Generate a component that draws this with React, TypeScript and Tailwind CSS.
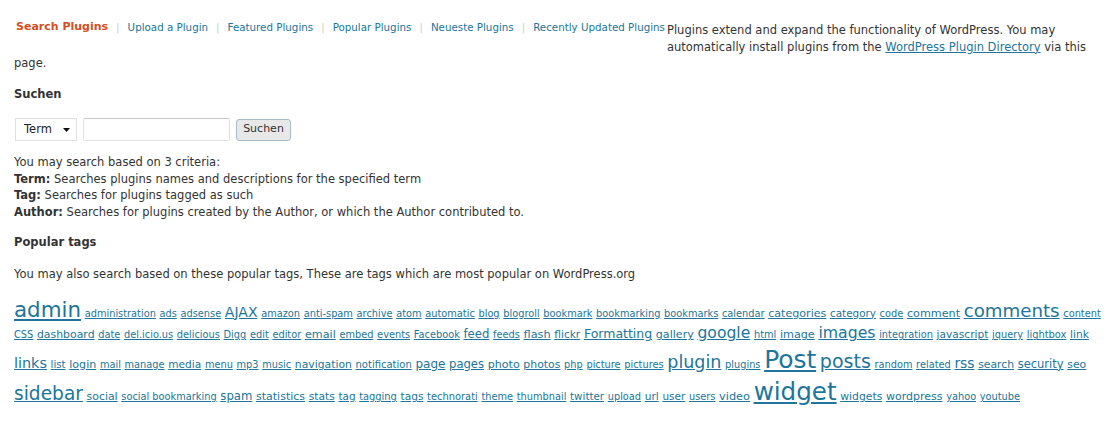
import React from "react";

const tags: [string, string][] = [
    ["admin", "text-[21.4px]"],
    ["administration", "text-[9.8px]"],
    ["ads", "text-[9.8px]"],
    ["adsense", "text-[9.8px]"],
    ["AJAX", "text-[14px]"],
    ["amazon", "text-[9.8px]"],
    ["anti-spam", "text-[9.8px]"],
    ["archive", "text-[9.8px]"],
    ["atom", "text-[9.8px]"],
    ["automatic", "text-[9.8px]"],
    ["blog", "text-[9.8px]"],
    ["blogroll", "text-[9.8px]"],
    ["bookmark", "text-[9.8px]"],
    ["bookmarking", "text-[9.8px]"],
    ["bookmarks", "text-[9.8px]"],
    ["calendar", "text-[9.8px]"],
    ["categories", "text-[11.1px]"],
    ["category", "text-[10.4px]"],
    ["code", "text-[9.8px]"],
    ["comment", "text-[11.2px]"],
    ["comments", "text-[18.2px]"],
    ["content", "text-[9.8px]"],
    ["CSS", "text-[9.8px]"],
    ["dashboard", "text-[10.9px]"],
    ["date", "text-[9.8px]"],
    ["del.icio.us", "text-[9.8px]"],
    ["delicious", "text-[9.8px]"],
    ["Digg", "text-[9.8px]"],
    ["edit", "text-[9.8px]"],
    ["editor", "text-[9.8px]"],
    ["email", "text-[11.2px]"],
    ["embed", "text-[9.8px]"],
    ["events", "text-[9.8px]"],
    ["Facebook", "text-[9.8px]"],
    ["feed", "text-[11.7px]"],
    ["feeds", "text-[9.8px]"],
    ["flash", "text-[11.3px]"],
    ["flickr", "text-[10.6px]"],
    ["Formatting", "text-[12.5px]"],
    ["gallery", "text-[11.1px]"],
    ["google", "text-[15.6px]"],
    ["html", "text-[9.8px]"],
    ["image", "text-[11.2px]"],
    ["images", "text-[15.7px]"],
    ["integration", "text-[9.8px]"],
    ["javascript", "text-[10.6px]"],
    ["jquery", "text-[9.8px]"],
    ["lightbox", "text-[9.9px]"],
    ["link", "text-[10.7px]"],
    ["links", "text-[14.4px]"],
    ["list", "text-[10.2px]"],
    ["login", "text-[11.1px]"],
    ["mail", "text-[9.8px]"],
    ["manage", "text-[9.8px]"],
    ["media", "text-[10.6px]"],
    ["menu", "text-[9.8px]"],
    ["mp3", "text-[9.8px]"],
    ["music", "text-[9.8px]"],
    ["navigation", "text-[10.8px]"],
    ["notification", "text-[10px]"],
    ["page", "text-[12px]"],
    ["pages", "text-[11.6px]"],
    ["photo", "text-[11.1px]"],
    ["photos", "text-[10.9px]"],
    ["php", "text-[9.8px]"],
    ["picture", "text-[9.8px]"],
    ["pictures", "text-[9.8px]"],
    ["plugin", "text-[17.5px]"],
    ["plugins", "text-[9.8px]"],
    ["Post", "text-[24.9px]"],
    ["posts", "text-[19px]"],
    ["random", "text-[9.8px]"],
    ["related", "text-[9.8px]"],
    ["rss", "text-[13.8px]"],
    ["search", "text-[10.8px]"],
    ["security", "text-[11.5px]"],
    ["seo", "text-[10.8px]"],
    ["sidebar", "text-[18.6px]"],
    ["social", "text-[10.9px]"],
    ["social bookmarking", "text-[9.8px]"],
    ["spam", "text-[11.7px]"],
    ["statistics", "text-[11px]"],
    ["stats", "text-[10.7px]"],
    ["tag", "text-[10.4px]"],
    ["tagging", "text-[9.9px]"],
    ["tags", "text-[10.6px]"],
    ["technorati", "text-[9.9px]"],
    ["theme", "text-[9.8px]"],
    ["thumbnail", "text-[9.8px]"],
    ["twitter", "text-[10.3px]"],
    ["upload", "text-[9.8px]"],
    ["url", "text-[10.6px]"],
    ["user", "text-[10.5px]"],
    ["users", "text-[9.8px]"],
    ["video", "text-[11.3px]"],
    ["widget", "text-[24.6px]"],
    ["widgets", "text-[10.8px]"],
    ["wordpress", "text-[11px]"],
    ["yahoo", "text-[9.8px]"],
    ["youtube", "text-[9.8px]"],
];

const navLinks = ["Upload a Plugin", "Featured Plugins", "Popular Plugins", "Neueste Plugins", "Recently Updated Plugins"];

export default function App() {
    return (
        <div className="min-h-[422px] bg-white px-[14px] pt-[22px] font-['DejaVu_Sans',sans-serif] text-[11.5px] leading-[16.5px] text-[#333]">
            {/* sub navigation, floated like the old admin screens */}
            <ul className="float-left -mt-[3px] mr-[2px] ml-[2px] flex h-[28px] items-start text-[10.3px] leading-[16.5px]">
                <li className="font-bold text-[#d54e21] text-[11px]">Search Plugins</li>
                {navLinks.map((l) => (
                    <li key={l} className="flex">
                        <span className="px-[8px] text-[#ccc]">|</span>
                        <a href="#" className="text-[#21759b]">{l}</a>
                    </li>
                ))}
            </ul>
            <p>
                Plugins extend and expand the functionality of WordPress. You may automatically install plugins from the{" "}
                <a href="#" className="text-[#21759b] underline">WordPress Plugin Directory</a> via this page.
            </p>

            <h4 className="mt-[14px] font-bold">Suchen</h4>
            <form className="mt-[16px] flex items-center gap-[6px] pl-[1px]">
                <div className="relative">
                    <select className="h-[23px] w-[62px] appearance-none border border-[#dfdfdf] bg-white pl-[8px] text-[11.5px] text-[#222]">
                        <option>Term</option>
                    </select>
                    <svg className="pointer-events-none absolute right-[7px] top-[10px]" width="7" height="4" viewBox="0 0 7 4">
                        <path d="M0 0h7L3.5 4z" fill="#111" />
                    </svg>
                </div>
                <input type="text" className="h-[23px] w-[147px] rounded-[2px] border border-[#dfdfdf] border-t-[#c6c6c6] bg-white" />
                <button type="button" className="h-[22px] w-[55px] rounded-[3px] border border-[#a7bccb] bg-[#e8e8e8] text-[11px] text-[#333]">
                    Suchen
                </button>
            </form>

            <p className="mt-[13px]">
                You may search based on 3 criteria:<br />
                <strong>Term:</strong> Searches plugins names and descriptions for the specified term<br />
                <strong>Tag:</strong> Searches for plugins tagged as such<br />
                <strong>Author:</strong> Searches for plugins created by the Author, or which the Author contributed to.
            </p>

            <h4 className="mt-[14px] font-bold">Popular tags</h4>
            <p className="mt-[15.5px]">You may also search based on these popular tags, These are tags which are most popular on WordPress.org</p>

            <p className="mt-[13px] leading-[1.3]">
                {tags.map(([t, size]) => (
                    <React.Fragment key={t}>
                        <a href="#" className={`${size} text-[#21759b] underline`}>{t}</a>{" "}
                    </React.Fragment>
                ))}
            </p>
        </div>
    );
}
